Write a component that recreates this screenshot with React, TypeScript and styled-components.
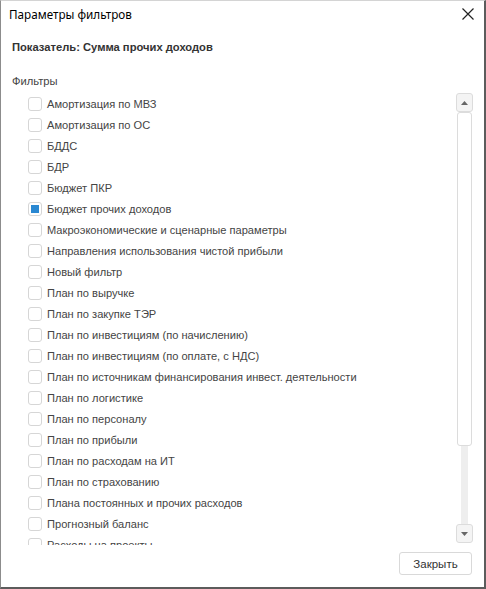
import React from 'react'
import styled, { createGlobalStyle } from 'styled-components'

const GlobalStyle = createGlobalStyle`
  html, body {
    margin: 0;
    padding: 0;
    background: #ffffff;
  }
  * {
    box-sizing: border-box;
  }
`

const FILTERS = [
  'Амортизация по МВЗ',
  'Амортизация по ОС',
  'БДДС',
  'БДР',
  'Бюджет ПКР',
  'Бюджет прочих доходов',
  'Макроэкономические и сценарные параметры',
  'Направления использования чистой прибыли',
  'Новый фильтр',
  'План по выручке',
  'План по закупке ТЭР',
  'План по инвестициям (по начислению)',
  'План по инвестициям (по оплате, с НДС)',
  'План по источникам финансирования инвест. деятельности',
  'План по логистике',
  'План по персоналу',
  'План по прибыли',
  'План по расходам на ИТ',
  'План по страхованию',
  'Плана постоянных и прочих расходов',
  'Прогнозный баланс',
  'Расходы на проекты',
]

const CHECKED = 'Бюджет прочих доходов'

// Dialog frame
const Window = styled.div`
  width: 486px;
  height: 589px;
  display: flex;
  flex-direction: column;
  background: #fff;
  border-top: 1px solid #d4d4d4;
  border-left: 1px solid #8c8c8c;
  border-right: 2px solid #5c5c5c;
  border-bottom: 2px solid #5c5c5c;
  font-family: 'Liberation Sans', Arial, sans-serif;
`

const TitleBar = styled.div`
  height: 33px;
  display: flex;
  align-items: center;
  justify-content: space-between;
  padding: 0 8px 0 8px;
`

const Title = styled.span`
  font-size: 11.7px;
  color: #000;
  font-family: 'Noto Sans', 'Liberation Sans', sans-serif;
`

const CloseButton = styled.button`
  background: transparent;
  border: none;
  padding: 0;
  width: 16px;
  height: 16px;
  cursor: pointer;

  svg {
    display: block;
  }
`

const Body = styled.div`
  flex: 1;
  display: flex;
  flex-direction: column;
  padding: 13px 10px 0 11px;
`

const Caption = styled.div`
  font-size: 11.2px;
  font-weight: bold;
  color: #333;
  height: 14px;
  line-height: 14px;
`

const SectionLabel = styled.div`
  font-size: 11.2px;
  color: #444;
  margin-top: 20px;
  line-height: 14px;
`

const ListArea = styled.div`
  display: flex;
  margin-top: 5px;
  height: 450px;
`

const List = styled.div`
  flex: 1;
  overflow: hidden;
  padding-left: 16px;
  margin-bottom: -2px;
`

const Row = styled.label`
  display: flex;
  align-items: center;
  height: 21px;
  gap: 5px;
  font-size: 11.1px;
  color: #444;
  white-space: nowrap;
`

const Box = styled.span<{ checked?: boolean }>`
  width: 14px;
  height: 14px;
  flex: none;
  border: 1px solid #d6d6d6;
  border-radius: 3px;
  background: #fff;
  display: flex;
  align-items: center;
  justify-content: center;

  &::after {
    content: '';
    display: ${(p) => (p.checked ? 'block' : 'none')};
    width: 8px;
    height: 8px;
    background: #2a88d2;
  }
`

// Scrollbar drawn as in the reference
const ScrollBar = styled.div`
  width: 17px;
  display: flex;
  flex-direction: column;
  align-items: center;
  margin-right: 1px;
`

const ArrowButton = styled.div`
  width: 17px;
  height: 19px;
  flex: none;
  border: 1px solid #dcdcdc;
  border-radius: 3px;
  background: #f4f4f4;
  display: flex;
  align-items: center;
  justify-content: center;
`

const Thumb = styled.div`
  width: 15px;
  height: 334px;
  flex: none;
  border: 1px solid #dcdcdc;
  border-radius: 3px;
  background: #fff;
`

const Track = styled.div`
  flex: 1;
  width: 7px;
  background: #eeeeee;
`

const Footer = styled.div`
  height: 44px;
  display: flex;
  justify-content: flex-end;
  align-items: flex-start;
  padding: 9px 2px 0 0;
`

const Button = styled.button`
  width: 73px;
  height: 23px;
  border: 1px solid #d9d9d9;
  border-radius: 3px;
  background: #fff;
  font-family: 'Liberation Sans', Arial, sans-serif;
  font-size: 11.5px;
  color: #333;
  padding: 0;
`

export default function App() {
  return (
    <>
      <GlobalStyle />
      <Window>
        <TitleBar>
          <Title>Параметры фильтров</Title>
          <CloseButton aria-label="close">
            <svg width="16" height="16" viewBox="0 0 16 16">
              <path d="M2.5 2.5 L13.5 13.5 M13.5 2.5 L2.5 13.5" stroke="#222" strokeWidth="1.2" />
            </svg>
          </CloseButton>
        </TitleBar>
        <Body>
          <Caption>Показатель: Сумма прочих доходов</Caption>
          <SectionLabel>Фильтры</SectionLabel>
          <ListArea>
            <List>
              {FILTERS.map((name) => (
                <Row key={name}>
                  <Box checked={name === CHECKED} />
                  {name}
                </Row>
              ))}
            </List>
            <ScrollBar>
              <ArrowButton>
                <svg width="7" height="4" viewBox="0 0 7 4">
                  <path d="M0 4 L3.5 0 L7 4 Z" fill="#666" />
                </svg>
              </ArrowButton>
              <Thumb />
              <Track />
              <ArrowButton>
                <svg width="7" height="4" viewBox="0 0 7 4">
                  <path d="M0 0 L3.5 4 L7 0 Z" fill="#666" />
                </svg>
              </ArrowButton>
            </ScrollBar>
          </ListArea>
          <Footer>
            <Button>Закрыть</Button>
          </Footer>
        </Body>
      </Window>
    </>
  )
}
